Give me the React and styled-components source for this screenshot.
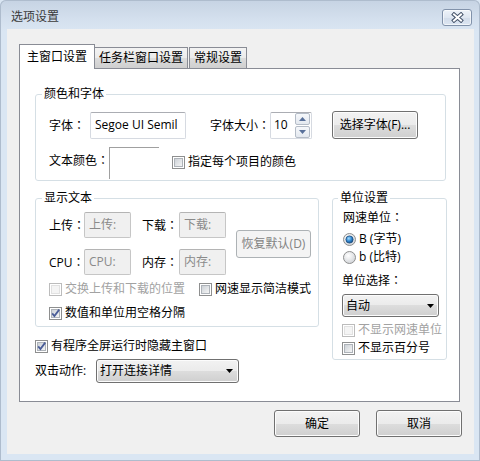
import React, { useId } from "react";
import styled, { createGlobalStyle, css } from "styled-components";

const GlobalStyle = createGlobalStyle`
  html, body {
    margin: 0;
    padding: 0;
    background: #dae6f3;
  }
  body {
    font-family: "Open Sans", "Noto Sans CJK SC", sans-serif;
    font-size: 12px;
    color: #000;
  }
  * {
    box-sizing: border-box;
  }
`;

const Window = styled.div`
  width: 480px;
  height: 461px;
  display: flex;
  flex-direction: column;
  background: linear-gradient(#c6d3e3 0px, #d3dfed 18px, #dae6f3 32px);
  border-radius: 6px 6px 0 0;
  box-shadow: inset 0 0 0 1px #aebccd;
  overflow: hidden;
`;

const TitleBar = styled.div`
  flex: none;
  height: 29px;
  display: flex;
  align-items: center;
  justify-content: space-between;
  padding: 5px 8px 0 11px;
`;

const Title = styled.div`
  color: #3a3a3a;
  line-height: 16px;
`;

const CloseButton = styled.div`
  width: 30px;
  height: 17px;
  border: 1px solid #8192aa;
  border-radius: 3px;
  background: linear-gradient(#eef3f9, #dfe7f1 50%, #d2dcea 51%, #dce6f2);
  box-shadow: inset 0 0 0 1px rgba(255, 255, 255, 0.6);
  display: flex;
  align-items: center;
  justify-content: center;
`;

const Client = styled.div`
  flex: 1;
  margin: 0 6px 7px 7px;
  background: #f0f0f0;
  padding: 15px 12px 0 12px;
  display: flex;
  flex-direction: column;
`;

const TabStrip = styled.div`
  display: flex;
  align-items: flex-end;
  height: 25px;
  margin-bottom: -1px;
`;

const Tab = styled.div`
  width: ${(p) => p.$w}px;
  height: ${(p) => (p.$active ? 25 : 21)}px;
  margin-left: ${(p) => p.$ml || 0}px;
  margin-bottom: ${(p) => (p.$active ? 0 : 1)}px;
  border: 1px solid #898c95;
  border-bottom: none;
  background: ${(p) =>
    p.$active
      ? "#fff"
      : "linear-gradient(#f3f3f3, #ebebeb 50%, #dddddd 50%, #cfcfcf)"};
  display: flex;
  align-items: center;
  justify-content: center;
  line-height: 16px;
  position: relative;
  z-index: ${(p) => (p.$active ? 2 : 1)};
`;

const Panel = styled.div`
  width: 441px;
  height: 334px;
  border: 1px solid #898c95;
  background: #fff;
  padding: 17px 0 0 15px;
`;

const Group = styled.fieldset`
  margin: 0;
  padding: 0;
  width: ${(p) => p.$w}px;
  border: 1px solid #d5dfe5;
  border-radius: 3px;
  min-inline-size: 0;
`;

const Legend = styled.legend`
  margin-left: ${(p) => p.$indent}px;
  padding: 0 2px;
  line-height: 16px;
`;

const FontBody = styled.div`
  padding: 9px 0 1px 13px;
  display: flex;
  flex-direction: column;
  gap: 8px;
`;

const Row = styled.div`
  display: flex;
  align-items: ${(p) => p.$align || "center"};
`;

const Label = styled.span`
  flex: none;
  width: ${(p) => (p.$w ? `${p.$w}px` : "auto")};
  margin-left: ${(p) => p.$ml || 0}px;
  margin-top: ${(p) => p.$mt || 0}px;
  line-height: 16px;
  white-space: nowrap;
`;

/* centred full-width colon, as the Windows UI font draws it */
const Colon = styled.span`
  font-family: "Noto Sans CJK TC", "Noto Sans CJK SC", sans-serif;
`;

const TextBox = styled.div`
  flex: none;
  width: ${(p) => p.$w}px;
  height: ${(p) => p.$h}px;
  border: 1px solid ${(p) => (p.$disabled ? "#c6c6c6" : "#d6dae1")};
  border-top-color: ${(p) => (p.$disabled ? "#b4b4b4" : "#abadb3")};
  border-radius: 2px;
  background: ${(p) => (p.$disabled ? "#f0f0f0" : "#fff")};
  color: ${(p) => (p.$disabled ? "#8a8a8a" : "#000")};
  padding: 0 3px 0 4px;
  display: flex;
  align-items: center;
  line-height: 16px;
  overflow: hidden;
  white-space: nowrap;
`;

const SpinBox = styled.div`
  flex: none;
  width: 42px;
  height: 27px;
  border: 1px solid #d6dae1;
  border-top-color: #abadb3;
  border-radius: 2px;
  background: #fff;
  display: flex;
  align-items: center;
  justify-content: space-between;
  padding: 0 1px 0 3px;
  line-height: 16px;
`;

const SpinColumn = styled.div`
  display: flex;
  flex-direction: column;
  gap: 1px;
`;

const SpinButton = styled.div`
  width: 15px;
  height: 12px;
  border: 1px solid #b4bcc7;
  border-radius: 2px;
  background: linear-gradient(#f6f8fb, #e3e8ef);
  display: flex;
  align-items: center;
  justify-content: center;
`;

const Button = styled.button`
  flex: none;
  width: ${(p) => p.$w}px;
  height: ${(p) => p.$h}px;
  margin-left: ${(p) => p.$ml || 0}px;
  padding: 0;
  font: inherit;
  color: #000;
  line-height: 16px;
  border: 1px solid #707070;
  border-radius: 3px;
  background: linear-gradient(#f2f2f2 0%, #ebebeb 50%, #dddddd 50%, #cfcfcf 100%);
  box-shadow: inset 0 0 0 1px #fcfcfc;
  display: flex;
  align-items: center;
  justify-content: center;
  ${(p) =>
    p.$disabled &&
    css`
      border-color: #adb2b5;
      background: #f4f4f4;
      box-shadow: none;
      color: #838383;
    `}
`;

const ColorWell = styled.div`
  flex: none;
  width: 50px;
  height: 32px;
  border-top: 1px solid #a0a0a0;
  border-left: 1px solid #a0a0a0;
`;

const CheckItem = styled.label`
  flex: none;
  display: flex;
  align-items: center;
  gap: 3px;
  width: ${(p) => (p.$w ? `${p.$w}px` : "auto")};
  margin-left: ${(p) => p.$ml || 0}px;
  margin-top: ${(p) => p.$mt || 0}px;
  height: 16px;
  line-height: 16px;
  white-space: nowrap;
  color: ${(p) => (p.$disabled ? "#a2a2a2" : "#000")};
`;

const Columns = styled.div`
  display: flex;
  align-items: flex-start;
  gap: 13px;
  margin-top: 9px;
`;

const LeftColumn = styled.div`
  width: 284px;
  display: flex;
  flex-direction: column;
`;

const TextBody = styled.div`
  padding: 6px 0 5px 13px;
  display: flex;
  flex-direction: column;
`;

const LabelGrid = styled.div`
  display: grid;
  grid-template-columns: 35px 47px 48px 47px;
  grid-auto-rows: 26px;
  row-gap: 11px;
  align-items: center;
`;

const CheckRow = styled.div`
  display: flex;
  margin-top: ${(p) => p.$mt}px;
`;

const UnitBody = styled.div`
  padding: 3px 0 3px 9px;
  display: flex;
  flex-direction: column;
`;

const Stack = styled.div`
  display: flex;
  flex-direction: column;
  gap: 2px;
  margin-top: 5px;
  margin-left: ${(p) => p.$ml || 0}px;
`;

const Select = styled.div`
  flex: none;
  width: ${(p) => p.$w}px;
  height: ${(p) => p.$h}px;
  margin-top: ${(p) => p.$mt || 0}px;
  border: 1px solid #707070;
  border-radius: 3px;
  background: linear-gradient(#f2f2f2 0%, #ebebeb 50%, #dddddd 50%, #cfcfcf 100%);
  box-shadow: inset 0 0 0 1px #fcfcfc;
  display: flex;
  align-items: center;
  justify-content: space-between;
  padding: 0 ${(p) => p.$pr}px 0 3px;
  line-height: 16px;
`;

const DblClickRow = styled.div`
  display: flex;
  align-items: center;
  margin-top: 5px;
`;

const Footer = styled.div`
  display: flex;
  justify-content: flex-end;
  gap: 16px;
  margin-top: 8px;
`;

const cleanId = (id) => "g" + id.replace(/[^a-zA-Z0-9]/g, "");

function CheckBox({ checked, disabled }) {
  const id = cleanId(useId());
  return (
    <svg width="13" height="13" viewBox="0 0 13 13" style={{ flex: "none" }}>
      <defs>
        <linearGradient id={id} x1="0" y1="0" x2="1" y2="1">
          <stop offset="0" stopColor="#cacfd5" />
          <stop offset="1" stopColor="#f7f7f7" />
        </linearGradient>
      </defs>
      <rect x="0.5" y="0.5" width="12" height="12" fill="#fff" stroke={disabled ? "#bcbcbc" : "#8e8f8f"} />
      <rect
        x="2.5"
        y="2.5"
        width="8"
        height="8"
        fill={disabled ? "#f4f4f4" : `url(#${id})`}
        stroke={disabled ? "#e1e1e1" : "#aeb3b9"}
      />
      {checked && (
        <path d="M3.2 6.4 L5.4 9 L10.2 2.6" fill="none" stroke="#4a5d98" strokeWidth="1.8" />
      )}
    </svg>
  );
}

function Radio({ checked }) {
  const id = cleanId(useId());
  return (
    <svg width="13" height="13" viewBox="0 0 13 13" style={{ flex: "none" }}>
      <defs>
        <radialGradient id={id + "a"} cx="0.4" cy="0.35" r="0.7">
          <stop offset="0" stopColor="#ffffff" />
          <stop offset="1" stopColor="#cfd2d6" />
        </radialGradient>
        <radialGradient id={id + "b"} cx="0.4" cy="0.35" r="0.7">
          <stop offset="0" stopColor="#a6dcff" />
          <stop offset="0.55" stopColor="#2e86cf" />
          <stop offset="1" stopColor="#16497e" />
        </radialGradient>
      </defs>
      <circle cx="6.5" cy="6.5" r="6" fill={`url(#${id}a)`} stroke="#8e8f8f" />
      {checked && <circle cx="6.5" cy="6.5" r="3.6" fill={`url(#${id}b)`} stroke="#1a4d80" strokeWidth="0.8" />}
    </svg>
  );
}

const Arrow = () => (
  <svg width="7" height="4" viewBox="0 0 7 4">
    <polygon points="0,0 7,0 3.5,4" fill="#000" />
  </svg>
);

const SpinArrow = ({ up }) => (
  <svg width="7" height="4" viewBox="0 0 7 4">
    <polygon points={up ? "0,4 7,4 3.5,0" : "0,0 7,0 3.5,4"} fill="#58709a" />
  </svg>
);

export default function App() {
  return (
    <>
      <GlobalStyle />
      <Window>
        <TitleBar>
          <Title>选项设置</Title>
          <CloseButton>
            <svg width="13" height="11" viewBox="0 0 13 11">
              <path d="M3 2.5 L10 8.5 M10 2.5 L3 8.5" stroke="#44536a" strokeWidth="4" strokeLinecap="square" />
              <path d="M3 2.5 L10 8.5 M10 2.5 L3 8.5" stroke="#fff" strokeWidth="2" strokeLinecap="square" />
            </svg>
          </CloseButton>
        </TitleBar>

        <Client>
          <TabStrip>
            <Tab $w={76} $active>主窗口设置</Tab>
            <Tab $w={94} $ml={-1}>任务栏窗口设置</Tab>
            <Tab $w={58} $ml={1}>常规设置</Tab>
          </TabStrip>

          <Panel>
            <Group $w={411}>
              <Legend $indent={6}>颜色和字体</Legend>
              <FontBody>
                <Row>
                  <Label $w={41}>
                    字体<Colon>：</Colon>
                  </Label>
                  <TextBox $w={96} $h={27}>Segoe UI Semil</TextBox>
                  <Label $w={60} $ml={24}>
                    字体大小<Colon>：</Colon>
                  </Label>
                  <SpinBox>
                    10
                    <SpinColumn>
                      <SpinButton>
                        <SpinArrow up />
                      </SpinButton>
                      <SpinButton>
                        <SpinArrow />
                      </SpinButton>
                    </SpinColumn>
                  </SpinBox>
                  <Button $w={86} $h={28} $ml={20}>
                    选择字体(F)...
                  </Button>
                </Row>
                <Row $align="flex-start">
                  <Label $w={60} $mt={5}>
                    文本颜色<Colon>：</Colon>
                  </Label>
                  <ColorWell />
                  <CheckItem $ml={13} $mt={7}>
                    <CheckBox />
                    指定每个项目的颜色
                  </CheckItem>
                </Row>
              </FontBody>
            </Group>

            <Columns>
              <LeftColumn>
                <Group $w={284}>
                  <Legend $indent={6}>显示文本</Legend>
                  <TextBody>
                    <Row>
                      <LabelGrid>
                        <Label>
                          上传<Colon>：</Colon>
                        </Label>
                        <TextBox $w={47} $h={26} $disabled>
                          上传:
                        </TextBox>
                        <Label $ml={11}>
                          下载<Colon>：</Colon>
                        </Label>
                        <TextBox $w={47} $h={26} $disabled>
                          下载:
                        </TextBox>
                        <Label>
                          CPU<Colon>：</Colon>
                        </Label>
                        <TextBox $w={47} $h={26} $disabled>
                          CPU:
                        </TextBox>
                        <Label $ml={11}>
                          内存<Colon>：</Colon>
                        </Label>
                        <TextBox $w={47} $h={26} $disabled>
                          内存:
                        </TextBox>
                      </LabelGrid>
                      <Button $w={75} $h={28} $ml={10} $disabled>
                        恢复默认(D)
                      </Button>
                    </Row>
                    <CheckRow $mt={6}>
                      <CheckItem $w={150} $disabled>
                        <CheckBox disabled />
                        交换上传和下载的位置
                      </CheckItem>
                      <CheckItem>
                        <CheckBox />
                        网速显示简洁模式
                      </CheckItem>
                    </CheckRow>
                    <CheckRow $mt={8}>
                      <CheckItem>
                        <CheckBox checked />
                        数值和单位用空格分隔
                      </CheckItem>
                    </CheckRow>
                  </TextBody>
                </Group>

                <CheckItem $mt={11}>
                  <CheckBox checked />
                  有程序全屏运行时隐藏主窗口
                </CheckItem>

                <DblClickRow>
                  <Label $w={61}>双击动作:</Label>
                  <Select $w={143} $h={24} $pr={5}>
                    打开连接详情
                    <Arrow />
                  </Select>
                </DblClickRow>
              </LeftColumn>

              <Group $w={115}>
                <Legend $indent={5}>单位设置</Legend>
                <UnitBody>
                  <Label $ml={1}>
                    网速单位<Colon>：</Colon>
                  </Label>
                  <Stack $ml={1}>
                    <CheckItem>
                      <Radio checked />B (字节)
                    </CheckItem>
                    <CheckItem>
                      <Radio />b (比特)
                    </CheckItem>
                  </Stack>
                  <Label $mt={7}>
                    单位选择<Colon>：</Colon>
                  </Label>
                  <Select $w={97} $h={23} $mt={5} $pr={4}>
                    自动
                    <Arrow />
                  </Select>
                  <Stack>
                    <CheckItem $disabled>
                      <CheckBox disabled />
                      不显示网速单位
                    </CheckItem>
                    <CheckItem>
                      <CheckBox />
                      不显示百分号
                    </CheckItem>
                  </Stack>
                </UnitBody>
              </Group>
            </Columns>
          </Panel>

          <Footer>
            <Button $w={86} $h={27}>
              确定
            </Button>
            <Button $w={86} $h={27}>
              取消
            </Button>
          </Footer>
        </Client>
      </Window>
    </>
  );
}
